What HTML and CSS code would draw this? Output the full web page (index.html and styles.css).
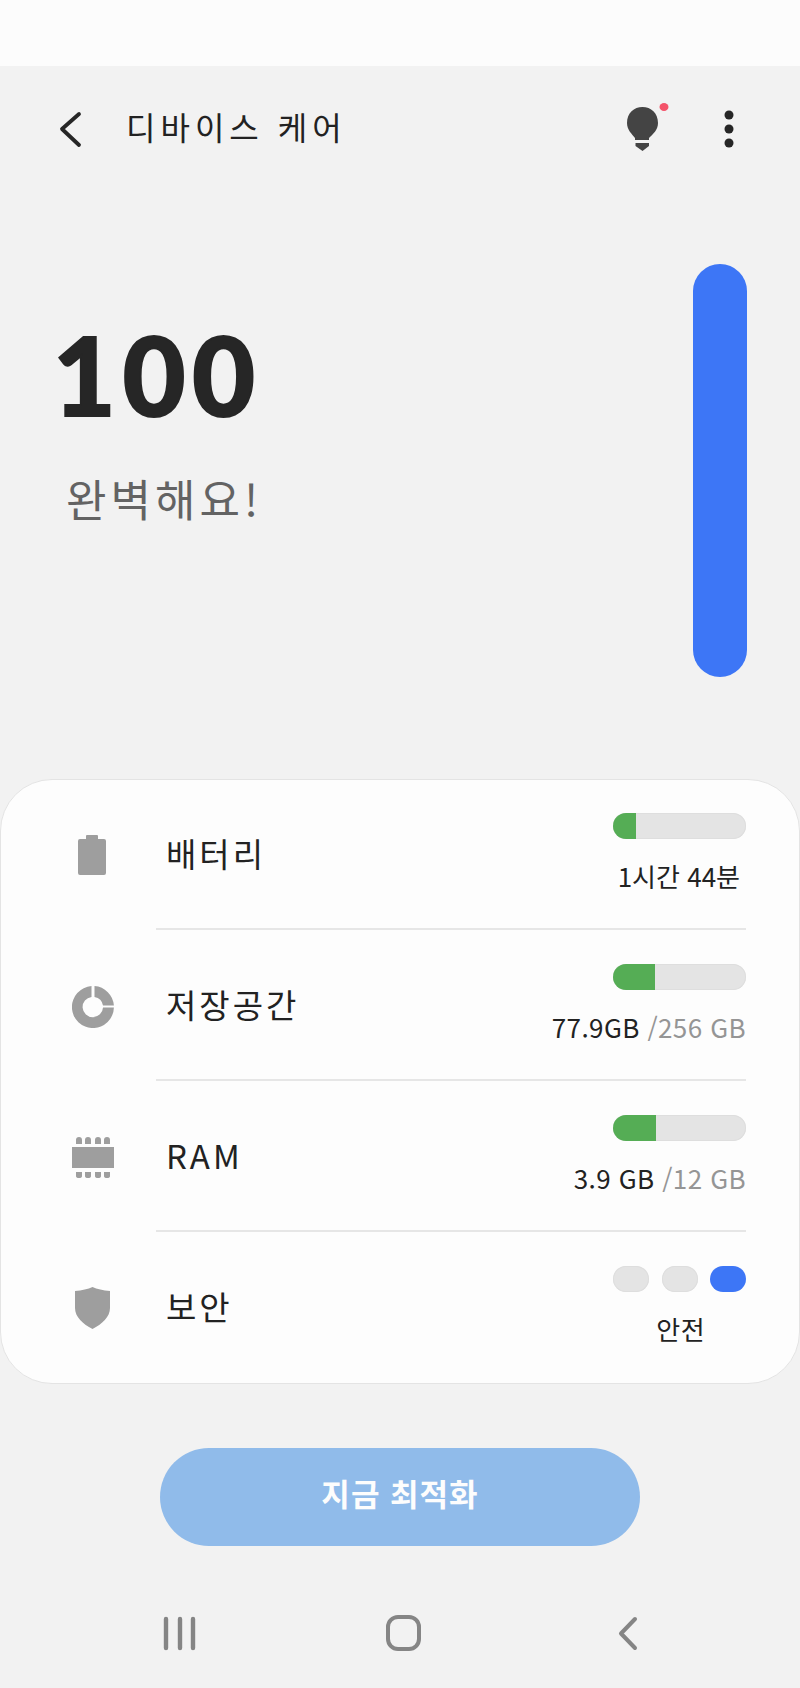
FILE: index.html
```html
<!DOCTYPE html>
<html lang="ko">
  <head>
    <meta charset="UTF-8" />
    <title>디바이스 케어</title>
    <link rel="stylesheet" href="styles.css">
  </head>
  <body>
    <div class="status-bar"></div>

    <header class="top-bar">
      <svg class="back-icon" width="24" height="40" viewBox="0 0 24 40">
        <path d="M21 5 L4 20 L21 36" fill="none" stroke="#262626" stroke-width="3.800" stroke-linecap="round" stroke-linejoin="round" />
      </svg>
      <h1 class="title">디바이스 케어</h1>
      <svg class="bulb-icon" width="42" height="52" viewBox="0 0 42 52">
        <path d="M15.500 4 C7 4 0 10 0 20 C0 27 5 31 8 35 V37 H22 V35 C26 31 31 27 31 20 C31 10 24 4 15.500 4 Z" fill="#444444" />
        <path d="M8.500 40 H22 V43 L15.500 48 L8.500 43 Z" fill="#444444" />
        <ellipse cx="37" cy="4" rx="4.500" ry="4" fill="#f4536a" />
      </svg>
      <svg class="more-icon" width="10" height="38" viewBox="0 0 10 38">
        <circle cx="5" cy="5" r="4.500" fill="#262626" />
        <circle cx="5" cy="19" r="4.500" fill="#262626" />
        <circle cx="5" cy="33" r="4.500" fill="#262626" />
      </svg>
    </header>

    <section class="hero">
      <div class="hero-text">
        <div class="score">100</div>
        <div class="score-label">완벽해요!</div>
      </div>
      <div class="score-bar"></div>
    </section>

    <section class="card">
      <div class="row">
        <div class="row-icon">
          <svg width="30" height="40" viewBox="0 0 30 40">
            <path d="M8 1 Q8 0 9 0 H19 Q20 0 20 1 V4 H26 Q28 4 28 6 V38 Q28 40 26 40 H2 Q0 40 0 38 V6 Q0 4 2 4 H8 Z" fill="#9e9e9e" />
          </svg>
        </div>
        <div class="row-body">
          <div class="row-label">배터리</div>
          <div class="row-info">
            <div class="meter"><div class="meter-fill" style="width: 23px"></div></div>
            <div class="info-text inset-small">1시간 44분</div>
          </div>
        </div>
      </div>

      <div class="row">
        <div class="row-icon icon-low">
          <svg width="42" height="42" viewBox="0 0 42 42">
            <path d="M22.500 0.100 A21 21 0 0 1 41.900 19.500 H31 A10.500 10.500 0 0 0 22.500 10.900 Z" fill="#9e9e9e" />
            <path d="M41.900 21.500 A21 21 0 1 1 19.500 0.100 V10.900 A10.200 10.200 0 1 0 31 21.500 Z" fill="#9e9e9e" />
          </svg>
        </div>
        <div class="row-body">
          <div class="row-label">저장공간</div>
          <div class="row-info">
            <div class="meter"><div class="meter-fill" style="width: 42px"></div></div>
            <div class="info-text">77.9GB <span class="info-total">/256 GB</span></div>
          </div>
        </div>
      </div>

      <div class="row">
        <div class="row-icon icon-low">
          <svg width="42" height="42" viewBox="0 0 42 42">
            <rect x="0" y="10" width="42" height="21" fill="#9e9e9e" />
            <path d="M4 7 V3 Q4 0 7 0 Q10 0 10 3 V7 Z M13 7 V3 Q13 0 16 0 Q19 0 19 3 V7 Z M23 7 V3 Q23 0 26 0 Q29 0 29 3 V7 Z M32 7 V3 Q32 0 35 0 Q38 0 38 3 V7 Z" fill="#9e9e9e" />
            <path d="M4 35 V39 Q4 41 7 41 Q10 41 10 39 V35 Z M13 35 V39 Q13 41 16 41 Q19 41 19 39 V35 Z M23 35 V39 Q23 41 26 41 Q29 41 29 39 V35 Z M32 35 V39 Q32 41 35 41 Q38 41 38 39 V35 Z" fill="#9e9e9e" />
          </svg>
        </div>
        <div class="row-body">
          <div class="row-label">RAM</div>
          <div class="row-info">
            <div class="meter"><div class="meter-fill" style="width: 43px"></div></div>
            <div class="info-text">3.9 GB <span class="info-total">/12 GB</span></div>
          </div>
        </div>
      </div>

      <div class="row row-last">
        <div class="row-icon">
          <svg width="36" height="42" viewBox="0 0 36 42">
            <path d="M17.500 0 C22 2 28 3.500 35 4 V21 C35 30 27 37 17.500 42 C8 37 0 30 0 21 V4 C7 3.500 13 2 17.500 0 Z" fill="#9e9e9e" />
          </svg>
        </div>
        <div class="row-body">
          <div class="row-label">보안</div>
          <div class="row-info">
            <div class="pills">
              <div class="pill"></div>
              <div class="pill"></div>
              <div class="pill pill-on"></div>
            </div>
            <div class="info-text inset-large">안전</div>
          </div>
        </div>
      </div>
    </section>

    <div class="action">
      <button class="optimize">지금 최적화</button>
    </div>

    <nav class="nav-bar">
      <svg width="40" height="44" viewBox="0 0 40 44">
        <path d="M6 8 V37 M20 8 V37 M33 8 V37" fill="none" stroke="#858585" stroke-width="4.400" stroke-linecap="round" />
      </svg>
      <svg width="40" height="44" viewBox="0 0 40 44">
        <rect x="5" y="6" width="31" height="32" rx="10" fill="none" stroke="#858585" stroke-width="4" />
      </svg>
      <svg width="40" height="44" viewBox="0 0 40 44">
        <path d="M29 8 L15 22.500 L29 37" fill="none" stroke="#858585" stroke-width="4" stroke-linecap="round" stroke-linejoin="round" />
      </svg>
    </nav>
  </body>
</html>
```

FILE: styles.css
```css
body,
html {
  margin: 0;
  padding: 0;
}
body {
  width: 800px;
  height: 1688px;
  overflow: hidden;
  background-color: #f2f2f2;
  color: #222222;
  font-family: "Noto Sans CJK KR", "Noto Sans", sans-serif;
}

.status-bar {
  height: 66px;
  background-color: #fcfcfc;
}

/* header */
.top-bar {
  display: flex;
  align-items: center;
  height: 126px;
}
.top-bar svg {
  flex: none;
}
.back-icon {
  margin-left: 58px;
}
.title {
  flex: 1;
  margin: 0 0 6px 44px;
  font-size: 32px;
  font-weight: 400;
  line-height: 50px;
  letter-spacing: 5px;
  white-space: nowrap;
}
.more-icon {
  margin: 0 66px 0 55px;
}

/* score */
.hero {
  display: flex;
  justify-content: space-between;
  height: 587px;
  padding: 72px 53px 0 58px;
  box-sizing: border-box;
}
.score {
  margin: 55px 0 0 -5px;
  font-family: "Lato", sans-serif;
  font-size: 108px;
  font-weight: 900;
  line-height: 110px;
  letter-spacing: 7px;
  -webkit-text-stroke: 2px #262626;
  color: #262626;
}
.score-label {
  margin: 39px 0 0 8px;
  font-size: 44px;
  line-height: 60px;
  letter-spacing: 4px;
  color: #636363;
  white-space: nowrap;
}
.score-bar {
  width: 54px;
  height: 413px;
  border-radius: 27px;
  background-color: #3d76f6;
}

/* card */
.card {
  height: 605px;
  box-sizing: border-box;
  border: 1px solid #e4e4e4;
  border-radius: 52px;
  background-color: #fdfdfd;
}
.row {
  display: flex;
  height: 151px;
}
.row:first-child {
  height: 150px;
}
.row-icon {
  display: flex;
  align-items: center;
  justify-content: center;
  width: 184px;
  margin-right: -29px;
  flex: none;
}
.icon-low {
  padding-top: 3px;
  box-sizing: border-box;
}
.row-body {
  display: flex;
  justify-content: space-between;
  flex: 1;
  margin-right: 53px;
  padding-top: 34px;
  box-sizing: border-box;
  border-bottom: 2px solid #e6e6e6;
}
.row:first-child .row-body {
  padding-top: 33px;
}
.row-last .row-body {
  border-bottom: none;
}
.row-label {
  margin: 15px 0 0 10px;
  font-size: 33px;
  line-height: 50px;
  letter-spacing: 3px;
  color: #222222;
}
.row-info {
  display: flex;
  flex-direction: column;
  align-items: flex-end;
}
.meter {
  width: 133px;
  height: 26px;
  border-radius: 13px;
  background-color: #e4e4e4;
  box-shadow: inset 0 0 0 1px #dedede;
  overflow: hidden;
}
.meter-fill {
  height: 100%;
  background-color: #55ad55;
}
.pills {
  display: flex;
  gap: 12.500px;
}
.pill {
  width: 36px;
  height: 26px;
  border-radius: 13px;
  background-color: #e4e4e4;
  box-shadow: inset 0 0 0 1px #dedede;
}
.pill-on {
  background-color: #3d76f6;
  box-shadow: none;
}
.info-text {
  margin-top: 17px;
  font-size: 26px;
  line-height: 40px;
  letter-spacing: 0.400px;
  white-space: nowrap;
  color: #222222;
}
.info-total {
  color: #959595;
}
.inset-small {
  padding-right: 6px;
  letter-spacing: 0;
}
.inset-large {
  padding-right: 41px;
}

/* button + nav */
.action {
  display: flex;
  justify-content: center;
  padding-top: 64px;
}
.optimize {
  width: 480px;
  height: 98px;
  padding-bottom: 10px;
  border: none;
  border-radius: 49px;
  background-color: #90bbea;
  color: #fdfdfd;
  font-family: "Noto Sans CJK KR", sans-serif;
  font-size: 31px;
  font-weight: 700;
  letter-spacing: 1px;
}
.nav-bar {
  display: flex;
  gap: 183px;
  padding: 65px 0 0 160px;
}
```
